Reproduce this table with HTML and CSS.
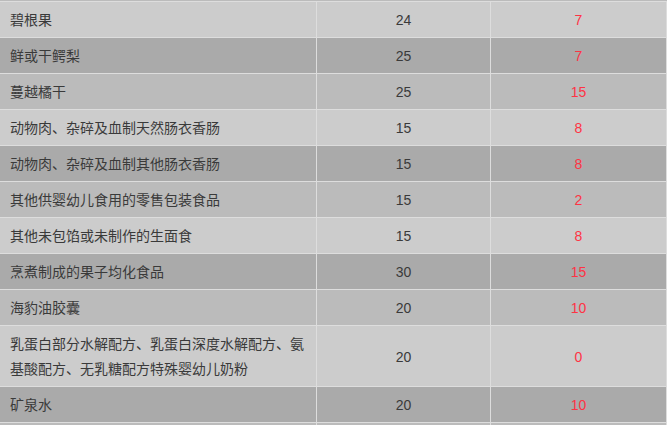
FILE: index.html
```html
<!DOCTYPE html>
<html lang="zh-CN">
<head>
<meta charset="utf-8">
<title>食品</title>
<link rel="stylesheet" href="styles.css">
</head>
<body>
<table class="grid">
  <colgroup>
    <col class="c-name">
    <col class="c-num">
    <col class="c-val">
  </colgroup>
  <tbody>
    <tr class="r-light"><td class="name">碧根果</td><td class="num">24</td><td class="val">7</td></tr>
    <tr class="r-dark"><td class="name">鲜或干鳄梨</td><td class="num">25</td><td class="val">7</td></tr>
    <tr class="r-mid"><td class="name">蔓越橘干</td><td class="num">25</td><td class="val">15</td></tr>
    <tr class="r-light"><td class="name">动物肉、杂碎及血制天然肠衣香肠</td><td class="num">15</td><td class="val">8</td></tr>
    <tr class="r-dark"><td class="name">动物肉、杂碎及血制其他肠衣香肠</td><td class="num">15</td><td class="val">8</td></tr>
    <tr class="r-mid"><td class="name">其他供婴幼儿食用的零售包装食品</td><td class="num">15</td><td class="val">2</td></tr>
    <tr class="r-light"><td class="name">其他未包馅或未制作的生面食</td><td class="num">15</td><td class="val">8</td></tr>
    <tr class="r-dark"><td class="name">烹煮制成的果子均化食品</td><td class="num">30</td><td class="val">15</td></tr>
    <tr class="r-mid"><td class="name">海豹油胶囊</td><td class="num">20</td><td class="val">10</td></tr>
    <tr class="r-light"><td class="name">乳蛋白部分水解配方、乳蛋白深度水解配方、氨基酸配方、无乳糖配方特殊婴幼儿奶粉</td><td class="num">20</td><td class="val">0</td></tr>
    <tr class="r-dark"><td class="name">矿泉水</td><td class="num">20</td><td class="val">10</td></tr>
    <tr class="r-mid"><td class="name">&nbsp;</td><td class="num">&nbsp;</td><td class="val">&nbsp;</td></tr>
  </tbody>
</table>
</body>
</html>
```
FILE: styles.css
```css
html, body {
  margin: 0;
  padding: 0;
}
body {
  background: #bbbbbb;
  padding-top: 1px;
  font-family: "Liberation Sans", "Noto Sans CJK SC", sans-serif;
  font-size: 14px;
  color: #3a3a3a;
  overflow: hidden;
}
.grid {
  width: 667px;
  table-layout: fixed;
  border-collapse: separate;
  border-spacing: 0;
  border-top: 1px solid #dddddd;
}
.c-name { width: 317px; }
.c-num { width: 174px; }
.c-val { width: 176px; }
.grid td {
  box-sizing: border-box;
  padding: 6px 10px 4px;
  line-height: 25px;
  border-right: 1px solid #dddddd;
  border-bottom: 1px solid #dddddd;
  vertical-align: middle;
}
.grid .name { text-align: left; }
.grid .num { text-align: center; }
.grid .val { text-align: center; color: #ff3344; }
.r-light { background: #cccccc; }
.r-dark { background: #aaaaaa; }
.r-mid { background: #bbbbbb; }
```
